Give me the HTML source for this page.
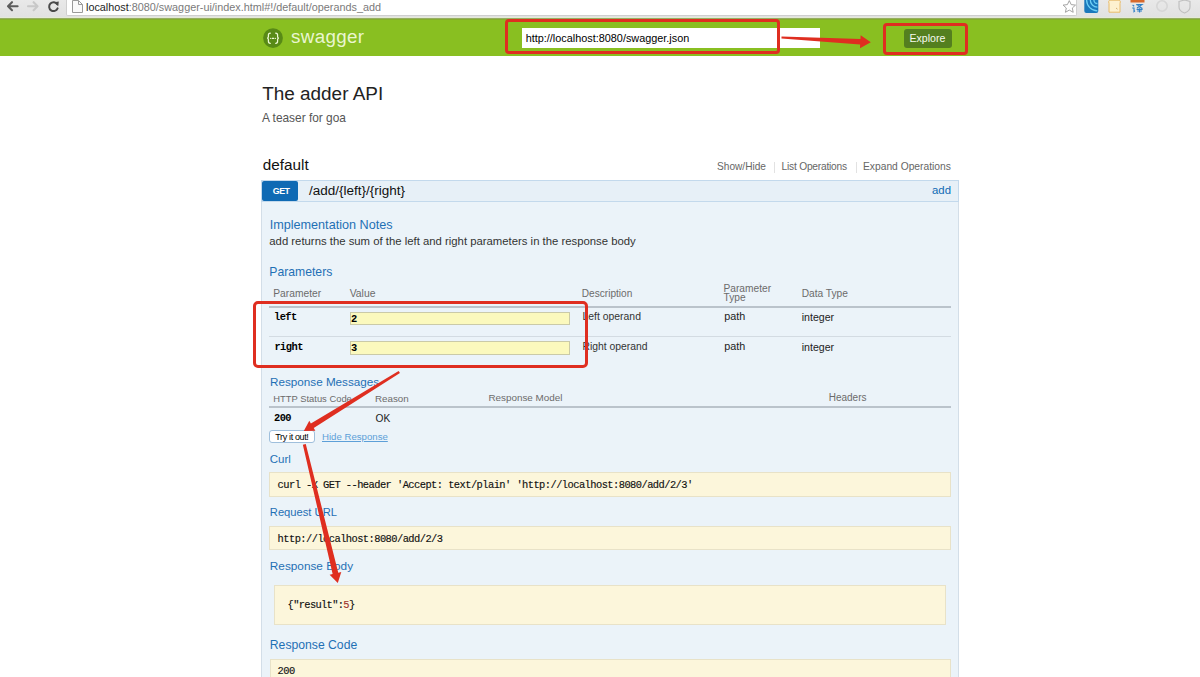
<!DOCTYPE html>
<html><head><meta charset="utf-8"><title>Swagger UI</title>
<style>
html,body{margin:0;padding:0;width:1200px;height:677px;overflow:hidden;background:#fff;font-family:"Liberation Sans", sans-serif;}
.t{position:absolute;white-space:pre;}
.b{position:absolute;}
.s{font-family:"Liberation Sans", sans-serif;}
.m{font-family:"Liberation Mono", monospace;}
.mr{-webkit-text-stroke:0.15px currentColor;}
svg.b{overflow:visible;}
</style></head><body>
<div class="b" style="left:0px;top:0px;width:1200px;height:17px;background:linear-gradient(#e9e9e9,#e1e1e1);"></div>
<div class="b" style="left:0px;top:17px;width:1200px;height:1px;background:#e4ead6;"></div>
<div class="b" style="left:66px;top:-3px;width:1011px;height:18.5px;background:#fff;border:1px solid #cfcfcf;border-top:none;border-radius:0 0 2px 2px;box-sizing:border-box;"></div>
<svg class="b" style="left:0;top:0" width="66" height="17" viewBox="0 0 66 17">
<g fill="none" stroke-linecap="round" stroke-linejoin="round">
<path d="M8 6.2 H17.6 M12 2.2 L8 6.2 L12 10.2" stroke="#5c5c5c" stroke-width="2.1"/>
<path d="M28 6.2 H37.6 M33.6 2.2 L37.6 6.2 L33.6 10.2" stroke="#c8c8c8" stroke-width="2.1"/>
<path d="M57.2 4.2 A4.4 4.4 0 1 0 57.6 8.4" stroke="#4a4a4a" stroke-width="2"/>
</g>
<path d="M54.2 2.2 L58.8 1.6 L58.2 6.2 Z" fill="#4a4a4a"/>
</svg>
<svg class="b" style="left:71px;top:0px" width="14" height="14" viewBox="0 0 14 14">
<path d="M1.5 0.5 H7.5 L11.5 4.5 V12.5 H1.5 Z" fill="#fafafa" stroke="#9a9a9a" stroke-width="1"/>
<path d="M7.5 0.5 V4.5 H11.5" fill="none" stroke="#9a9a9a" stroke-width="1"/>
</svg>
<div class="t s" style="left:86.00px;top:2.03px;font-size:10.83px;line-height:10.83px;color:#1e1e1e;font-weight:400;">localhost<span style="color:#7a7a7a">:8080/swagger-ui/index.html#!/default/operands_add</span></div>
<svg class="b" style="left:1058px;top:0px" width="142" height="17" viewBox="0 0 142 17">
<path d="M11.3 0.6 L13.2 4.6 L17.5 5.1 L14.3 8 L15.2 12.3 L11.3 10.1 L7.4 12.3 L8.3 8 L5.1 5.1 L9.4 4.6 Z" fill="#fff" stroke="#9a9a9a" stroke-width="0.9"/>
<rect x="26.3" y="-3" width="14" height="16" rx="2" fill="#1a78bb"/>
<path d="M28.6 0 A10.8 10.8 0 0 0 39.4 10.8 M32.3 0 A7.1 7.1 0 0 0 39.4 7.1 M35.9 0 A3.5 3.5 0 0 0 39.4 3.5" fill="none" stroke="#6fd0f5" stroke-width="1.3"/>
<path d="M51 12.2 V3.5 Q50 1.5 51.5 0.2 H61.5 Q63 1.5 62 3.5 V12.2 Z" fill="#fdf1cf" stroke="#e8bb6a" stroke-width="1"/><path d="M58 8 L59.5 9.2" stroke="#c9a05a" stroke-width="0.8"/>
<rect x="72.5" y="-2" width="14" height="4.5" fill="#d8692c"/>
<g fill="none" stroke="#2f7fc6" stroke-width="1.1">
<path d="M74.6 5 L76.2 6.2 M74.2 8 H76 V11.6 L77 10.8"/>
<path d="M78.2 4.6 H84 L79 8 M79.6 5.6 L84.4 8.4 M78.6 9.4 H84.6 M81.6 8.2 V12.4 M79.2 11 H84"/>
</g>
<circle cx="104" cy="6" r="5.2" fill="none" stroke="#d6d6d6" stroke-width="1.6"/>
<path d="M121 1.5 L126.5 0 L132 1.5 V7 Q132 11 126.5 13 Q121 11 121 7 Z" fill="none" stroke="#c0c0c0" stroke-width="1.2"/>
</svg>
<div class="b" style="left:0px;top:18px;width:1200px;height:38px;background:#89bf21;"></div>
<div class="b" style="left:0px;top:18px;width:1200px;height:1px;background:#96ad62;"></div>
<div class="b" style="left:0px;top:19px;width:1200px;height:1px;background:#85ae2e;"></div>
<svg class="b" style="left:0;top:0" width="300" height="60" viewBox="0 0 300 60">
<circle cx="273" cy="38.1" r="9.9" fill="#588a16"/>
<g fill="none" stroke="#eefad6" stroke-width="1.25" stroke-linecap="round">
<path d="M270.3 33.2 Q268.4 33.2 268.4 35.2 V36.6 Q268.4 38.2 267.1 38.2 Q268.4 38.2 268.4 39.8 V41.3 Q268.4 43.3 270.3 43.3"/>
<path d="M275.7 33.2 Q277.6 33.2 277.6 35.2 V36.6 Q277.6 38.2 278.9 38.2 Q277.6 38.2 277.6 39.8 V41.3 Q277.6 43.3 275.7 43.3"/>
<path d="M272.2 38.3 H273.8"/>
</g>
<circle cx="270.6" cy="38.3" r="0.65" fill="#eefad6"/><circle cx="275.4" cy="38.3" r="0.65" fill="#eefad6"/>
</svg>
<div class="t s" style="left:291.00px;top:27.89px;font-size:18.8px;line-height:18.8px;color:rgba(245,252,225,0.92);font-weight:400;letter-spacing:0.35px;">swagger</div>
<div class="b" style="left:522px;top:28px;width:298px;height:19.700000000000003px;background:#fff;"></div>
<div class="t s" style="left:525.70px;top:33.11px;font-size:10.86px;line-height:10.86px;color:#000;font-weight:400;">http://localhost:8080/swagger.json</div>
<div class="b" style="left:904px;top:28.8px;width:47.700000000000045px;height:18.8px;background:#547f1f;border-radius:3px;"></div>
<div class="t s" style="left:909.40px;top:32.71px;font-size:10.62px;line-height:10.62px;color:#f6faee;font-weight:400;">Explore</div>
<div class="t s" style="left:262.20px;top:84.58px;font-size:18.93px;line-height:18.93px;color:#222;font-weight:400;">The adder API</div>
<div class="t s" style="left:262.00px;top:113.03px;font-size:11.9px;line-height:11.9px;color:#555;font-weight:400;">A teaser for goa</div>
<div class="t s" style="left:262.75px;top:156.95px;font-size:15.3px;line-height:15.3px;color:#111;font-weight:400;">default</div>
<div class="t s" style="left:717.00px;top:162.32px;font-size:10.13px;line-height:10.13px;color:#666;font-weight:400;">Show/Hide</div>
<div class="b" style="left:774px;top:162px;width:1px;height:11px;background:#e2e2e2;"></div>
<div class="t s" style="left:781.60px;top:162.27px;font-size:10.2px;line-height:10.2px;color:#666;font-weight:400;letter-spacing:-0.22px;">List Operations</div>
<div class="b" style="left:856px;top:162px;width:1px;height:11px;background:#e2e2e2;"></div>
<div class="t s" style="left:863.00px;top:162.20px;font-size:10.28px;line-height:10.28px;color:#666;font-weight:400;">Expand Operations</div>
<div class="b" style="left:261px;top:180px;width:698px;height:22px;background:#e7f0f7;border:1px solid #c3d9ec;box-sizing:border-box;"></div>
<div class="b" style="left:262.3px;top:181px;width:36.0px;height:19.599999999999994px;background:#0f6ab4;border-radius:2px;"></div>
<div class="t s" style="left:272.70px;top:187.27px;font-size:8.9px;line-height:8.9px;color:#fff;font-weight:700;letter-spacing:-0.45px;">GET</div>
<div class="t s" style="left:309.00px;top:184.08px;font-size:13.49px;line-height:13.49px;color:#111;font-weight:400;">/add/{left}/{right}</div>
<div class="t s" style="right:249.00px;top:184.76px;font-size:11.39px;line-height:11.39px;color:#0f6ab4;font-weight:400;">add</div>
<div class="b" style="left:261px;top:202px;width:698px;height:498px;background:#ebf3f9;border:1px solid #d3dee8;border-top:none;box-sizing:border-box;"></div>
<div class="t s" style="left:269.70px;top:219.00px;font-size:12.64px;line-height:12.64px;color:#1f70b5;font-weight:400;">Implementation Notes</div>
<div class="t s" style="left:269.30px;top:235.90px;font-size:11.34px;line-height:11.34px;color:#333;font-weight:400;">add returns the sum of the left and right parameters in the response body</div>
<div class="t s" style="left:269.30px;top:266.18px;font-size:12.19px;line-height:12.19px;color:#1f70b5;font-weight:400;">Parameters</div>
<div class="t s" style="left:273.30px;top:289.23px;font-size:10.24px;line-height:10.24px;color:#6b6b6b;font-weight:400;">Parameter</div>
<div class="t s" style="left:349.70px;top:289.00px;font-size:10.4px;line-height:10.4px;color:#6b6b6b;font-weight:400;">Value</div>
<div class="t s" style="left:581.80px;top:289.35px;font-size:10.1px;line-height:10.1px;color:#6b6b6b;font-weight:400;">Description</div>
<div class="t s" style="left:723.50px;top:284.37px;font-size:10.2px;line-height:10.2px;color:#6b6b6b;font-weight:400;">Parameter</div>
<div class="t s" style="left:723.50px;top:292.67px;font-size:10.2px;line-height:10.2px;color:#6b6b6b;font-weight:400;">Type</div>
<div class="t s" style="left:801.70px;top:289.37px;font-size:10.2px;line-height:10.2px;color:#6b6b6b;font-weight:400;">Data Type</div>
<div class="b" style="left:269px;top:306px;width:682px;height:2px;background:#bac3cb;"></div>
<div class="t m" style="left:274.00px;top:312.43px;font-size:10.4px;line-height:10.4px;color:#000;font-weight:700;letter-spacing:-0.55px;">left</div>
<div class="b" style="left:350.3px;top:311.5px;width:220.2px;height:13.800000000000011px;background:#fbf9bd;border:1px solid #cacaa8;box-sizing:border-box;"></div>
<div class="t m" style="left:351.00px;top:313.93px;font-size:10.4px;line-height:10.4px;color:#000;font-weight:700;letter-spacing:-0.55px;">2</div>
<div class="t s" style="left:582.50px;top:312.28px;font-size:10.42px;line-height:10.42px;color:#333;font-weight:400;">Left operand</div>
<div class="t s" style="left:724.20px;top:310.76px;font-size:10.8px;line-height:10.8px;color:#222;font-weight:400;">path</div>
<div class="t s" style="left:801.70px;top:312.13px;font-size:10.6px;line-height:10.6px;color:#222;font-weight:400;">integer</div>
<div class="b" style="left:269px;top:336px;width:682px;height:1px;background:#d3dbe2;"></div>
<div class="t m" style="left:274.40px;top:342.23px;font-size:10.4px;line-height:10.4px;color:#000;font-weight:700;letter-spacing:-0.55px;">right</div>
<div class="b" style="left:350.3px;top:341.4px;width:220.2px;height:13.300000000000011px;background:#fbf9bd;border:1px solid #cacaa8;box-sizing:border-box;"></div>
<div class="t m" style="left:351.00px;top:343.43px;font-size:10.4px;line-height:10.4px;color:#000;font-weight:700;letter-spacing:-0.55px;">3</div>
<div class="t s" style="left:582.50px;top:342.33px;font-size:10.36px;line-height:10.36px;color:#333;font-weight:400;">Right operand</div>
<div class="t s" style="left:724.20px;top:340.76px;font-size:10.8px;line-height:10.8px;color:#222;font-weight:400;">path</div>
<div class="t s" style="left:801.70px;top:342.13px;font-size:10.6px;line-height:10.6px;color:#222;font-weight:400;">integer</div>
<div class="t s" style="left:270.00px;top:375.70px;font-size:11.7px;line-height:11.7px;color:#1f70b5;font-weight:400;">Response Messages</div>
<div class="t s" style="left:273.30px;top:393.84px;font-size:9.4px;line-height:9.4px;color:#6b6b6b;font-weight:400;">HTTP Status Code</div>
<div class="t s" style="left:375.00px;top:393.50px;font-size:9.8px;line-height:9.8px;color:#6b6b6b;font-weight:400;">Reason</div>
<div class="t s" style="left:488.40px;top:393.42px;font-size:9.9px;line-height:9.9px;color:#6b6b6b;font-weight:400;">Response Model</div>
<div class="t s" style="left:828.70px;top:393.34px;font-size:10.0px;line-height:10.0px;color:#6b6b6b;font-weight:400;">Headers</div>
<div class="b" style="left:269px;top:406px;width:682px;height:2px;background:#bac3cb;"></div>
<div class="t m" style="left:274.00px;top:412.93px;font-size:10.4px;line-height:10.4px;color:#000;font-weight:700;letter-spacing:-0.55px;">200</div>
<div class="t s" style="left:375.60px;top:413.77px;font-size:10.2px;line-height:10.2px;color:#222;font-weight:400;">OK</div>
<div class="b" style="left:269.3px;top:430px;width:45.39999999999998px;height:12.699999999999989px;background:#fff;border:1px solid #9fbfdc;border-radius:3px;box-sizing:border-box;"></div>
<div class="t s" style="left:275.30px;top:432.58px;font-size:9.0px;line-height:9.0px;color:#000;font-weight:400;letter-spacing:-0.36px;">Try it out!</div>
<div class="t s" style="left:322.00px;top:431.63px;font-size:9.65px;line-height:9.65px;color:#5d9fd8;font-weight:400;text-decoration:underline;">Hide Response</div>
<div class="t s" style="left:269.80px;top:453.57px;font-size:11.5px;line-height:11.5px;color:#1f70b5;font-weight:400;">Curl</div>
<div class="b" style="left:269.3px;top:472px;width:681.7px;height:24.5px;background:#fcf6db;border:1px solid #e8e2c8;box-sizing:border-box;"></div>
<div class="t m mr" style="left:277.60px;top:479.83px;font-size:10.4px;line-height:10.4px;color:#111;font-weight:400;letter-spacing:-0.55px;">curl -X GET --header 'Accept: text/plain' 'http://localhost:8080/add/2/3'</div>
<div class="t s" style="left:269.80px;top:507.32px;font-size:11.2px;line-height:11.2px;color:#1f70b5;font-weight:400;">Request URL</div>
<div class="b" style="left:269.3px;top:526.3px;width:681.7px;height:23.700000000000045px;background:#fcf6db;border:1px solid #e8e2c8;box-sizing:border-box;"></div>
<div class="t m mr" style="left:277.60px;top:533.63px;font-size:10.4px;line-height:10.4px;color:#111;font-weight:400;letter-spacing:-0.55px;">http://localhost:8080/add/2/3</div>
<div class="t s" style="left:269.80px;top:560.71px;font-size:11.8px;line-height:11.8px;color:#1f70b5;font-weight:400;">Response Body</div>
<div class="b" style="left:274px;top:585px;width:672px;height:39.5px;background:#fcf6db;border:1px solid #e8e2c8;box-sizing:border-box;"></div>
<div class="t m mr" style="left:287.60px;top:599.53px;font-size:10.4px;line-height:10.4px;color:#111;font-weight:400;letter-spacing:-0.66px;">{"result":<span style="color:#a0342c">5</span>}</div>
<div class="t s" style="left:269.80px;top:639.17px;font-size:12.2px;line-height:12.2px;color:#1f70b5;font-weight:400;">Response Code</div>
<div class="b" style="left:269.5px;top:659.3px;width:681.5px;height:40.700000000000045px;background:#fcf6db;border:1px solid #e8e2c8;box-sizing:border-box;"></div>
<div class="t m mr" style="left:277.60px;top:665.93px;font-size:10.4px;line-height:10.4px;color:#111;font-weight:400;letter-spacing:-0.55px;">200</div>
<div class="b" style="left:505px;top:18.75px;width:274.70000000000005px;height:35.0px;border:3.4px solid #df2e20;border-radius:4px;box-sizing:border-box;"></div>
<div class="b" style="left:882.8px;top:23.3px;width:84.90000000000009px;height:32.099999999999994px;border:3.4px solid #df2e20;border-radius:4px;box-sizing:border-box;"></div>
<div class="b" style="left:252.9px;top:300.6px;width:335.6px;height:67.09999999999997px;border:3.3px solid #df2e20;border-radius:5px;box-sizing:border-box;"></div>
<svg class="b" style="left:0;top:0" width="1200" height="677" viewBox="0 0 1200 677"><path d="M781.45 38.60 L860.17 44.41 L859.98 48.15 L870.80 42.20 L860.65 35.17 L860.46 38.91 L781.55 36.60 Z" fill="#df2e20"/><path d="M398.64 370.94 L310.86 423.40 L309.29 420.85 L303.80 431.00 L315.33 430.64 L313.75 428.08 L399.96 373.06 Z" fill="#df2e20"/><path d="M302.84 444.75 L332.63 574.06 L329.62 574.79 L337.80 583.10 L341.28 571.97 L338.27 572.70 L305.76 444.05 Z" fill="#df2e20"/></svg>
</body></html>
